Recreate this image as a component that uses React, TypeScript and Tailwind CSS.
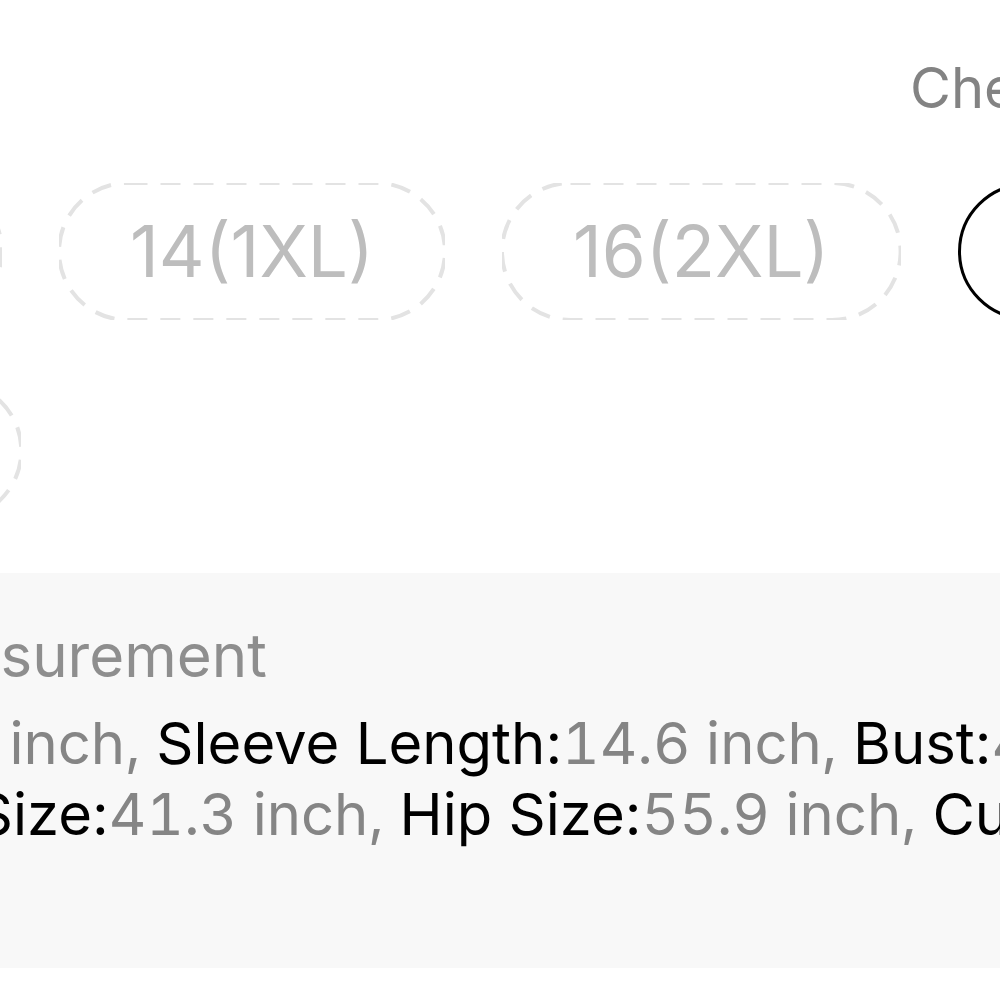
import React from 'react'

type Size = {
    label: string
    soldOut?: boolean
    selected?: boolean
}

const sizes: Size[] = [
    { label: '12(0XL)', soldOut: true },
    { label: '14(1XL)', soldOut: true },
    { label: '16(2XL)', soldOut: true },
    { label: '18(3XL)', selected: true },
    { label: '20(4XL)', soldOut: true },
]

const lineOne = [
    ['Length:', '26.4 inch, '],
    ['Sleeve Length:', '14.6 inch, '],
    ['Bust:', '44.9 inch, '],
]

const lineTwo = [
    ['Waist Size:', '41.3 inch, '],
    ['Hip Size:', '55.9 inch, '],
    ['Cuff:', '11.8 inch'],
]

function SizePill({ size }: { size: Size }) {
    return (
        <div
            className={`relative h-[137px] px-[71px] shrink-0 flex items-center justify-center rounded-full ${
                size.selected ? 'border-[3.5px] border-black text-black' : 'text-[#bdbdbd]'
            }`}
        >
            {size.soldOut && (
                <svg className="absolute inset-0 w-full h-full">
                    <rect
                        x="0"
                        y="0"
                        width="100%"
                        height="100%"
                        rx="68.5"
                        fill="none"
                        stroke="#e3e3e3"
                        strokeWidth="4"
                        strokeDasharray="20 13"
                    />
                </svg>
            )}
            <span className="text-[71px] leading-none whitespace-nowrap">{size.label}</span>
        </div>
    )
}

function MeasureLine({ items }: { items: string[][] }) {
    return (
        <>
            {items.map(([label, value]) => (
                <React.Fragment key={label}>
                    <span className="text-black">{label}</span>
                    <span className="text-[#858585] tabular-nums">{value}</span>
                </React.Fragment>
            ))}
        </>
    )
}

export default function App() {
    return (
        <div className="w-[1000px] h-[1000px] overflow-hidden bg-white font-['Inter','Liberation_Sans',sans-serif]">
            <header className="pt-[54px] pl-[910px] whitespace-nowrap">
                <span className="text-[56px] leading-[68px] text-[#838383]">Check My Size</span>
            </header>

            <div className="mt-[61px] ml-[-395px] w-[1900px] flex flex-wrap gap-x-[57px] gap-y-[62px]">
                {sizes.map(size => (
                    <SizePill key={size.label} size={size} />
                ))}
            </div>

            <section className="mt-[54px] bg-[#f8f8f8] pt-[47px] pb-[118px] whitespace-nowrap">
                <h3 className="ml-[-123px] text-[60px] leading-[70px] text-[#8e8e8e]">Measurement</h3>
                <div className="mt-[18px] text-[58px] leading-[71px]">
                    <div className="ml-[-341px]">
                        <MeasureLine items={lineOne} />
                    </div>
                    <div className="ml-[-191px]">
                        <MeasureLine items={lineTwo} />
                    </div>
                </div>
            </section>
        </div>
    )
}
